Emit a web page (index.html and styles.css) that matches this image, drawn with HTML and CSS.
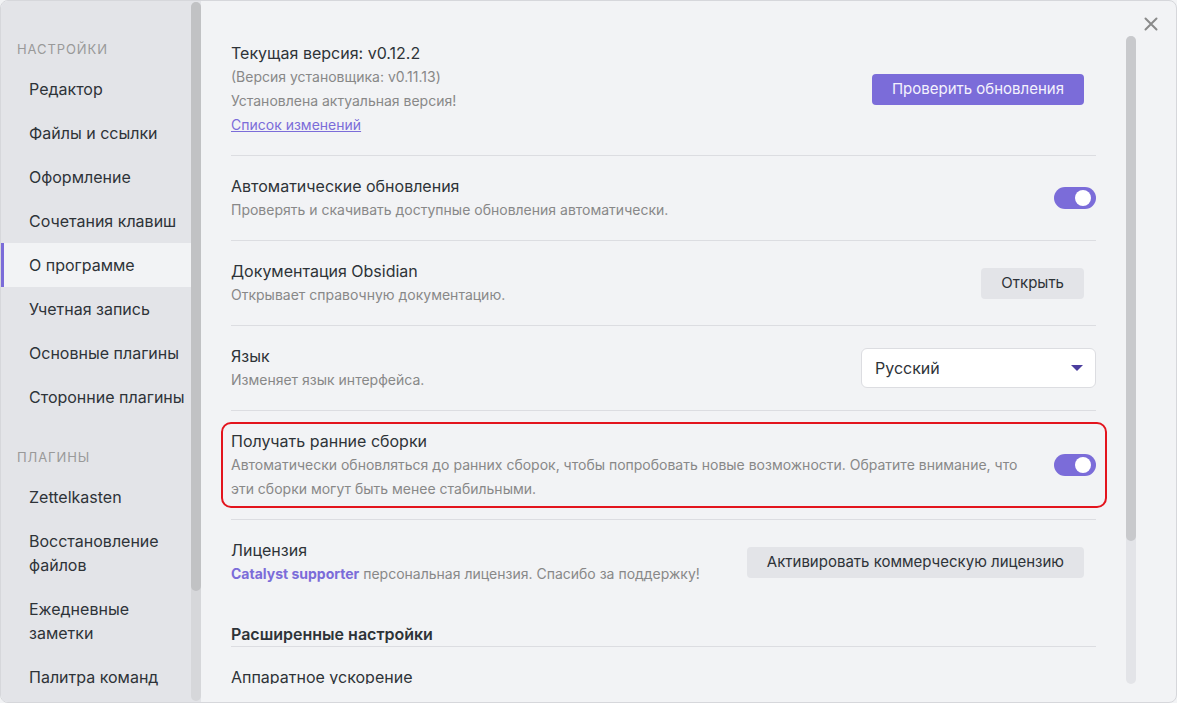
FILE: index.html
```html
<!DOCTYPE html>
<html lang="ru">
<head>
<meta charset="utf-8">
<title>Настройки — О программе</title>
<link rel="stylesheet" href="styles.css">
</head>
<body>
<div class="window">
  <aside class="sidebar">
    <nav class="side-list">
      <div class="group-title">Настройки</div>
      <div class="tab">Редактор</div>
      <div class="tab">Файлы и ссылки</div>
      <div class="tab">Оформление</div>
      <div class="tab">Сочетания клавиш</div>
      <div class="tab active">О программе</div>
      <div class="tab">Учетная запись</div>
      <div class="tab">Основные плагины</div>
      <div class="tab">Сторонние плагины</div>
      <div class="group-title second">Плагины</div>
      <div class="tab">Zettelkasten</div>
      <div class="tab">Восстановление файлов</div>
      <div class="tab">Ежедневные заметки</div>
      <div class="tab">Палитра команд</div>
    </nav>
    <div class="side-track"><div class="side-thumb"></div></div>
  </aside>

  <main class="main">
    <div class="content">
      <div class="item">
        <div class="info">
          <div class="name">Текущая версия: v0.12.2</div>
          <div class="desc">(Версия установщика: v0.11.13)</div>
          <div class="desc">Установлена актуальная версия!</div>
          <div class="desc"><a class="link" href="#">Список изменений</a></div>
        </div>
        <div class="control"><button class="btn primary">Проверить обновления</button></div>
      </div>

      <div class="item">
        <div class="info">
          <div class="name">Автоматические обновления</div>
          <div class="desc">Проверять и скачивать доступные обновления автоматически.</div>
        </div>
        <div class="control"><div class="toggle"><div class="knob"></div></div></div>
      </div>

      <div class="item">
        <div class="info">
          <div class="name">Документация Obsidian</div>
          <div class="desc">Открывает справочную документацию.</div>
        </div>
        <div class="control"><button class="btn">Открыть</button></div>
      </div>

      <div class="item">
        <div class="info">
          <div class="name">Язык</div>
          <div class="desc">Изменяет язык интерфейса.</div>
        </div>
        <div class="control">
          <div class="dropdown">
            <span>Русский</span>
            <svg class="caret" width="12" height="6" viewBox="0 0 12 6"><polygon points="0,0 12,0 6,6" fill="#4b3d9e"/></svg>
          </div>
        </div>
      </div>

      <div class="item highlighted">
        <div class="info">
          <div class="name">Получать ранние сборки</div>
          <div class="desc">Автоматически обновляться до ранних сборок, чтобы попробовать новые возможности. Обратите внимание, что эти сборки могут быть менее стабильными.</div>
        </div>
        <div class="control"><div class="toggle"><div class="knob"></div></div></div>
        <div class="outline"></div>
      </div>

      <div class="item">
        <div class="info">
          <div class="name">Лицензия</div>
          <div class="desc"><strong class="accent">Catalyst supporter</strong> персональная лицензия. Спасибо за поддержку!</div>
        </div>
        <div class="control"><button class="btn">Активировать коммерческую лицензию</button></div>
      </div>

      <div class="heading">Расширенные настройки</div>

      <div class="item plain">
        <div class="info">
          <div class="name">Аппаратное ускорение</div>
        </div>
      </div>
    </div>
    <div class="main-track"><div class="main-thumb"></div></div>
    <div class="close" aria-label="Закрыть">
      <svg width="14" height="14" viewBox="0 0 14 14"><path d="M1.5 1.5 L12.5 12.5 M12.5 1.5 L1.5 12.5" stroke="#8a8a8a" stroke-width="2" stroke-linecap="round" fill="none"/></svg>
    </div>
  </main>
</div>
</body>
</html>
```

FILE: styles.css
```css
* { box-sizing: border-box; }
html, body { margin: 0; padding: 0; }
body {
  width: 1177px;
  height: 703px;
  overflow: hidden;
  background: #f2f3f5;
  font-family: Inter, "Noto Sans", sans-serif;
  color: #2e3338;
}
.window {
  width: 1177px;
  height: 703px;
  border: 1px solid #d6d7db;
  border-radius: 8px;
  overflow: hidden;
  display: flex;
  background: #f2f3f5;
}
.sidebar {
  width: 200px;
  flex: none;
  display: flex;
  background: #e3e4e8;
}
.side-list {
  width: 190px;
  flex: none;
  padding-top: 39px;
  overflow: hidden;
}
.group-title {
  padding-left: 16px;
  font-size: 13px;
  line-height: 18px;
  letter-spacing: 0.07em;
  text-transform: uppercase;
  color: #999999;
  margin-bottom: 9px;
}
.group-title.second { margin-top: 29px; }
.tab {
  padding: 10px 2px 10px 28px;
  font-size: 16px;
  line-height: 24px;
  color: #2e3338;
}
.tab.active {
  background: #f2f3f5;
  box-shadow: inset 3px 0 0 #7b6cd9;
}
.side-track {
  width: 10px;
  flex: none;
  margin: 1px 0 1px;
  background: #d6d7da;
  border-radius: 5px;
}
.side-thumb {
  height: 589px;
  background: #c1c2c4;
  border-radius: 5px;
}

.main {
  flex: 1;
  display: flex;
  position: relative;
  align-items: flex-start;
}
.content {
  flex: 1;
  height: 683px;
  overflow: hidden;
  padding: 22px 30px 0 30px;
}
.item {
  display: flex;
  align-items: center;
  padding: 18px 0;
  border-top: 1px solid #dcdde1;
  position: relative;
}
.item:first-child { border-top: none; }
.item.plain { border-top: none; }
.info {
  flex: 1;
  margin-right: 12px;
}
.name {
  font-size: 16px;
  line-height: 24px;
  color: #2e3338;
}
.desc {
  font-size: 14px;
  line-height: 24px;
  color: #888888;
}
.link {
  color: #7b6cd9;
  text-decoration: underline;
}
.accent {
  color: #7b6cd9;
  font-weight: 700;
}
.control {
  flex: none;
  display: flex;
  align-items: center;
}
.btn {
  font-family: Inter, "Noto Sans", sans-serif;
  font-size: 15px;
  line-height: 20px;
  height: 31px;
  padding: 0 20px;
  margin-right: 12px;
  border: none;
  border-radius: 4px;
  background: #e3e4e8;
  color: #2e3338;
}
.btn.primary {
  background: #7b6cd9;
  color: #f4f2fd;
}
.toggle {
  width: 42px;
  height: 22px;
  border-radius: 11px;
  background: #7b6cd9;
  position: relative;
}
.knob {
  position: absolute;
  top: 3px;
  right: 5px;
  width: 16px;
  height: 16px;
  border-radius: 50%;
  background: #ffffff;
}
.dropdown {
  width: 235px;
  height: 40px;
  border: 1px solid #dcdde1;
  border-radius: 6px;
  background: #ffffff;
  display: flex;
  align-items: center;
  justify-content: space-between;
  padding: 0 12px 0 13px;
  font-size: 16px;
  color: #2e3338;
}
.caret { display: block; }
.outline {
  position: absolute;
  top: 11px;
  bottom: 11px;
  left: -10px;
  right: -11px;
  border: 2px solid #e3141d;
  border-radius: 10px;
  pointer-events: none;
}
.heading {
  padding-top: 18px;
  font-size: 16px;
  line-height: 24px;
  font-weight: 600;
  color: #2e3338;
  border-bottom: 1px solid #dcdde1;
}
.main-track {
  width: 10px;
  flex: none;
  margin: 35px 40px 0 0;
  height: 648px;
  background: #e3e4e8;
  border-radius: 5px;
}
.main-thumb {
  height: 505px;
  background: #c8c9cc;
  border-radius: 5px;
}
.close {
  position: absolute;
  top: 16px;
  right: 18px;
  width: 14px;
  height: 14px;
}
.close svg { display: block; }
```
